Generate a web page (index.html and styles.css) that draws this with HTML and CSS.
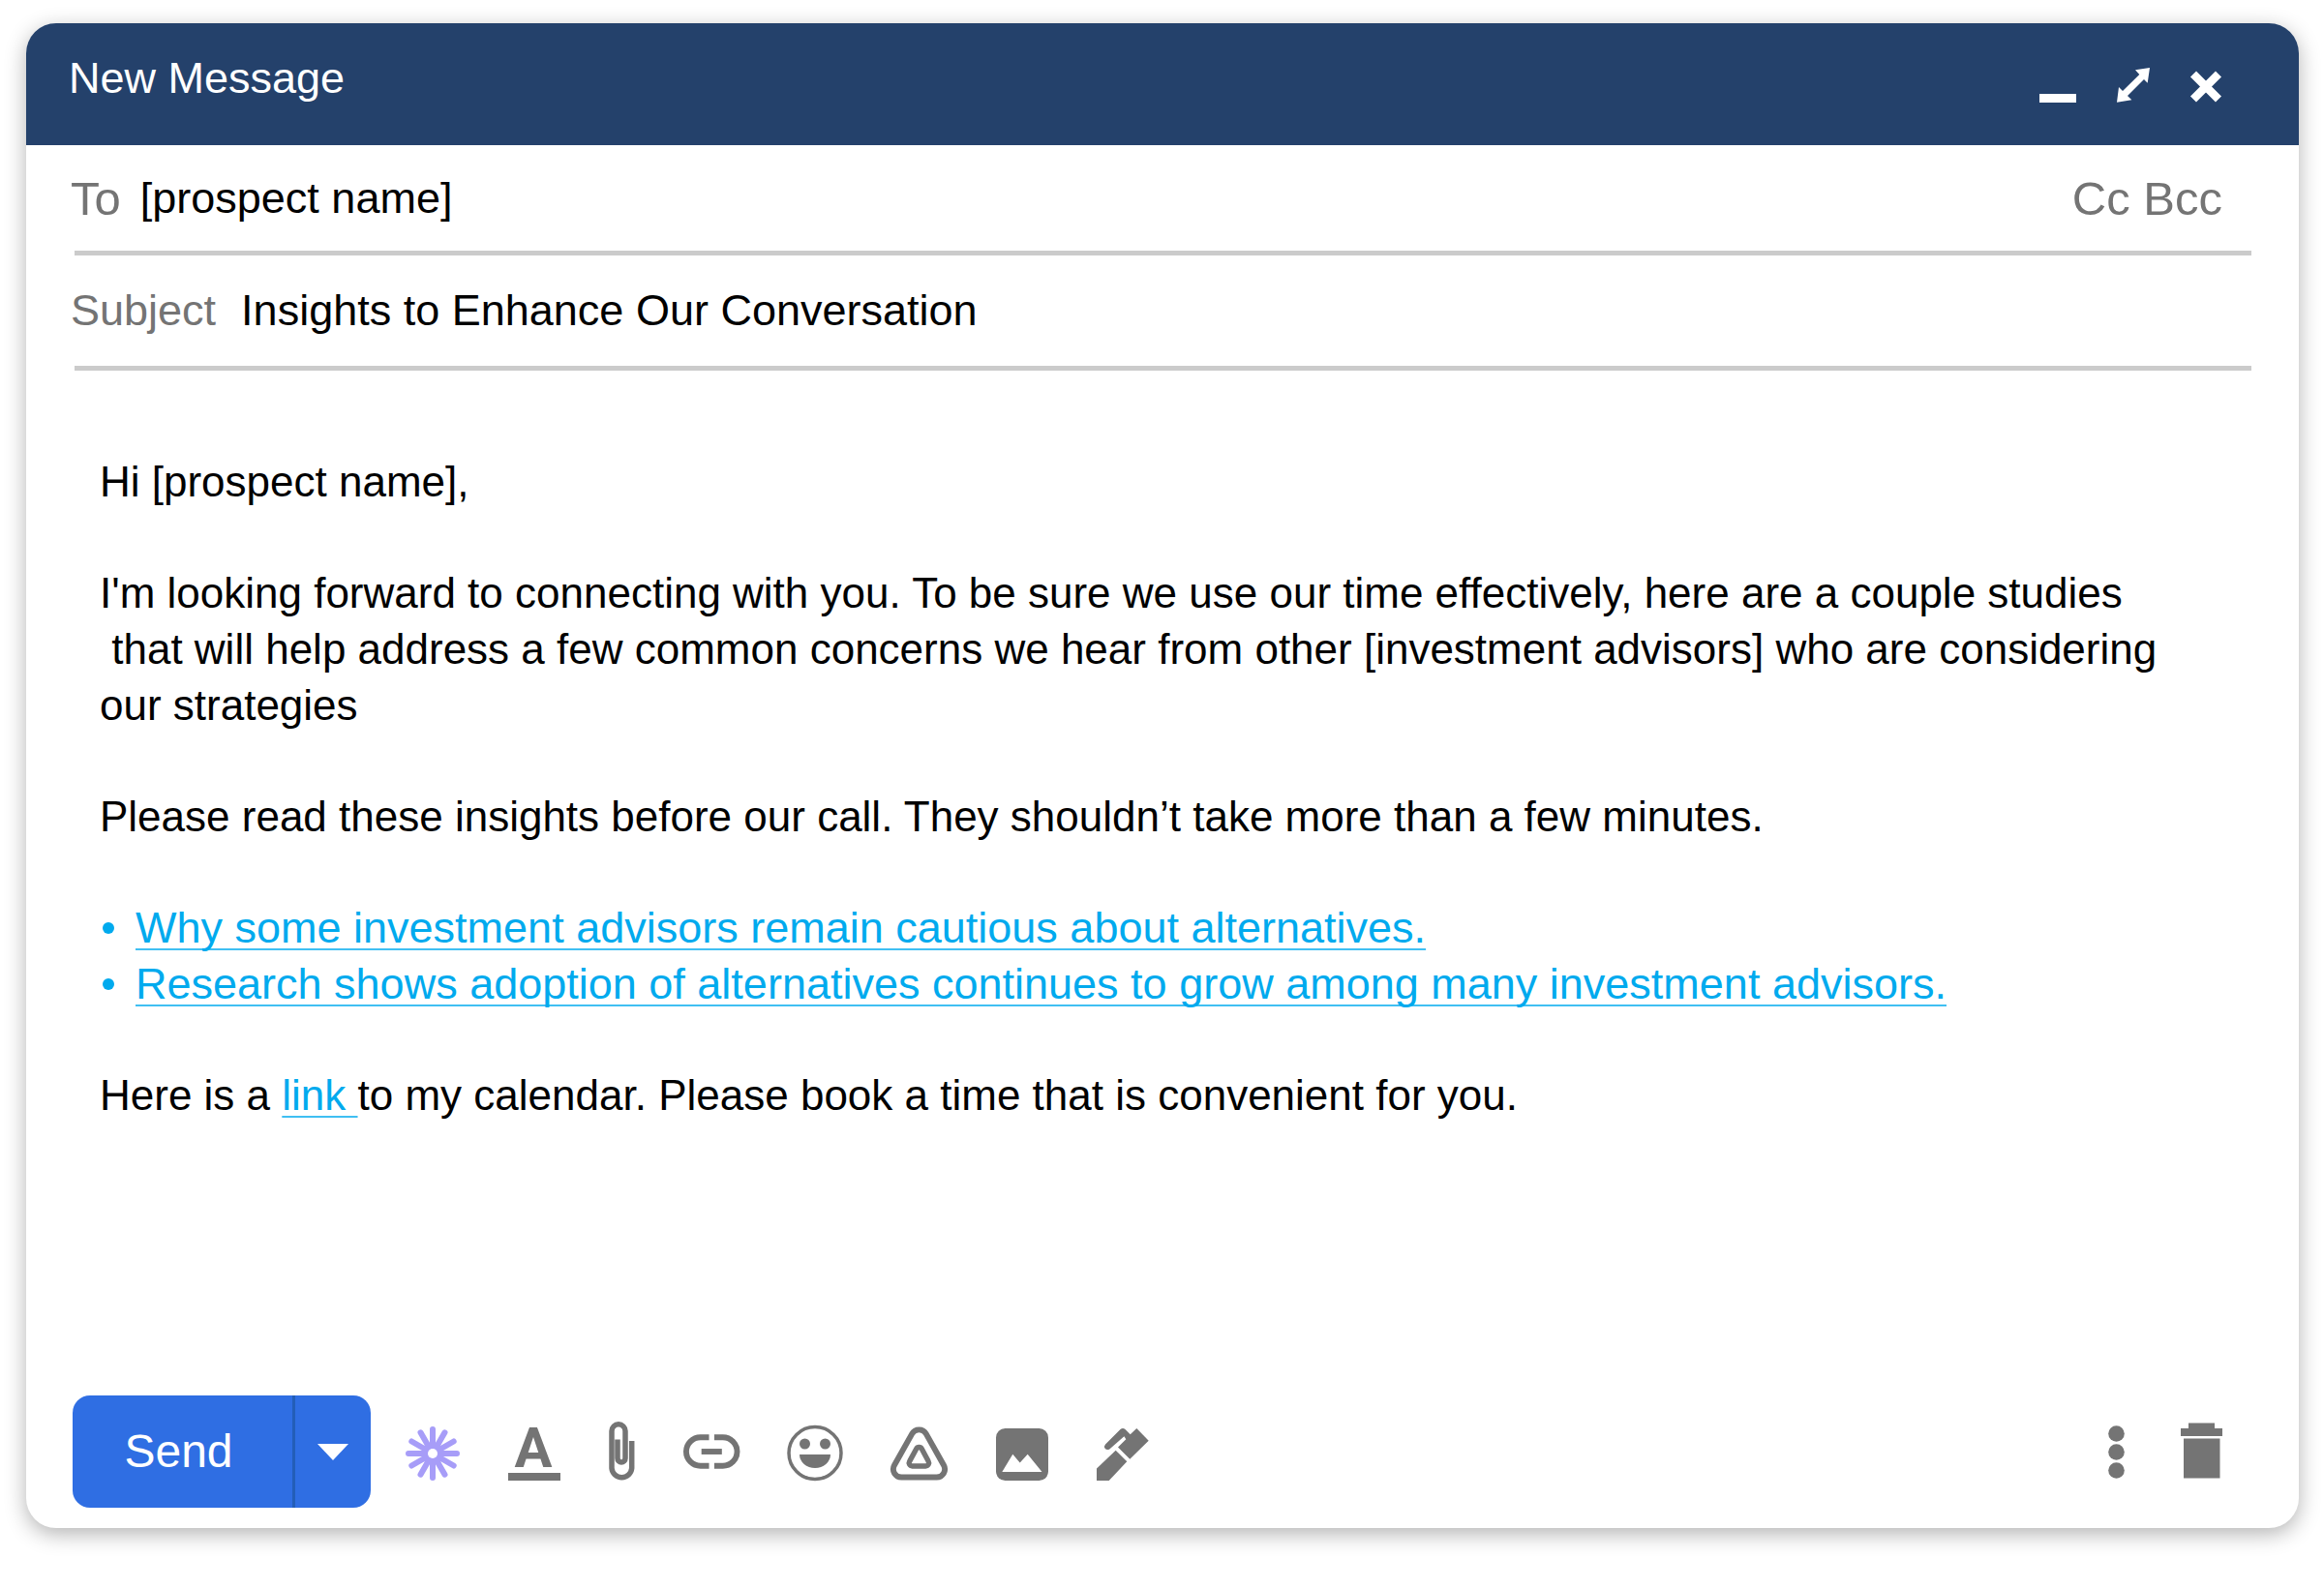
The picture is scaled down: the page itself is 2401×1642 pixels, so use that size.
FILE: index.html
```html
<!DOCTYPE html>
<html lang="en">
<head>
<meta charset="utf-8">
<title>New Message</title>
<link rel="stylesheet" href="styles.css">
</head>
<body>
<main class="compose">
  <header class="titlebar">
    <h1 class="title">New Message</h1>
    <div class="window-actions">
      <button type="button" class="icon-button" aria-label="Minimize">
        <svg width="38" height="36" viewBox="0 0 38 36"><rect y="27" width="38" height="9"/></svg>
      </button>
      <button type="button" class="icon-button" aria-label="Expand">
        <svg width="34" height="36" viewBox="0 0 34 36"><path d="M34 0 31.7 15.7 28 12 11 29 15.3 33.3 0 35.7 2 20 6 24 23.3 7 19 2.3Z"/></svg>
      </button>
      <button type="button" class="icon-button" aria-label="Close">
        <svg width="32" height="36" viewBox="0 0 32 36"><path d="M3 6.5 29 32.5M29 6.5 3 32.5" stroke="currentColor" stroke-width="8.5"/></svg>
      </button>
    </div>
  </header>

  <form class="form">
    <div class="field">
      <label class="label label-to" for="to">To</label>
      <input class="value" id="to" type="text" value="[prospect name]">
      <div class="copies"><button type="button" class="copy">Cc</button> <button type="button" class="copy">Bcc</button></div>
    </div>
    <hr class="rule">
    <div class="field field-subject">
      <label class="label" for="subject">Subject</label>
      <input class="value" id="subject" type="text" value="Insights to Enhance Our Conversation">
    </div>
    <hr class="rule">

    <div class="message">
      <p>Hi [prospect name],</p>
      <p>I'm looking forward to connecting with you. To be sure we use our time effectively, here are a couple studies<br>&nbsp;that will help address a few common concerns we hear from other [investment advisors] who are considering<br>our strategies</p>
      <p>Please read these insights before our call. They shouldn’t take more than a few minutes.</p>
      <ul class="links">
        <li><a href="#cautious">Why some investment advisors remain cautious about alternatives.</a></li>
        <li><a href="#adoption">Research shows adoption of alternatives continues to grow among many investment advisors.</a></li>
      </ul>
      <p>Here is a <a href="#calendar">link </a>to my calendar. Please book a time that is convenient for you.</p>
    </div>

    <footer class="toolbar">
      <div class="send-group">
        <button type="button" class="send">Send</button>
        <button type="button" class="send-more" aria-label="More send options">
          <svg width="32" height="17" viewBox="0 0 32 17"><path d="M0 0H32L16 17Z"/></svg>
        </button>
      </div>
      <div class="tools">
        <button type="button" class="icon-button assistant" aria-label="Assistant">
          <svg width="56" height="64" viewBox="0 0 56 64">
            <path d="M28 9V59M3 34H53M15.5 12.3 40.5 55.7M40.5 12.3 15.5 55.7M6.3 21.5 49.7 46.5M6.3 46.5 49.7 21.5" stroke="currentColor" stroke-width="6" stroke-linecap="round"/>
            <circle cx="28" cy="34" r="5" fill="#fff"/>
          </svg>
        </button>
        <button type="button" class="icon-button" aria-label="Text color">
          <svg width="54" height="64" viewBox="0 0 54 64"><text class="letter" x="26" y="48" text-anchor="middle">A</text><rect y="54" width="54" height="8"/></svg>
        </button>
        <button type="button" class="icon-button" aria-label="Attach file">
          <svg width="27" height="64" viewBox="0 0 27 64"><path transform="translate(0 1)" d="M23.7 20V48.3A10.4 10.4 0 0 1 3 48.3V9.8A7 7 0 0 1 17 9.8V38A4 4 0 0 1 9 38V18.5" fill="none" stroke="currentColor" stroke-width="5.5"/></svg>
        </button>
        <button type="button" class="icon-button" aria-label="Insert link">
          <svg width="58" height="64" viewBox="0 0 59 64"><path d="M27 17H18A15 15 0 0 0 18 47H27M32.5 17H41.5A15 15 0 0 1 41.5 47H32.5" fill="none" stroke="currentColor" stroke-width="6"/><rect x="19" y="29" width="21.5" height="6"/></svg>
        </button>
        <button type="button" class="icon-button" aria-label="Insert emoji">
          <svg width="56" height="64" viewBox="0 0 56 64"><circle cx="28" cy="33.5" r="27" fill="none" stroke="currentColor" stroke-width="3.5"/><circle cx="17.5" cy="24" r="5.5"/><circle cx="38.5" cy="24" r="5.5"/><path d="M12 35H44A16 14 0 0 1 12 35Z"/></svg>
        </button>
        <button type="button" class="icon-button" aria-label="Insert from drive">
          <svg width="59" height="64" viewBox="0 0 60 64"><g transform="translate(0 6)" fill="none" stroke="currentColor"><path stroke-width="6" d="M22.6 7.3A8.5 8.5 0 0 1 37.4 7.3L55.9 40.3A8.5 8.5 0 0 1 48.5 53H11.5A8.5 8.5 0 0 1 4.1 40.3Z"/><path stroke-width="5.5" d="M27.1 23.2A3.3 3.3 0 0 1 32.9 23.2L39.8 36.2A3.3 3.3 0 0 1 37 41.2H22.8A3.3 3.3 0 0 1 20 36.2Z"/></g></svg>
        </button>
        <button type="button" class="icon-button" aria-label="Insert photo">
          <svg width="54" height="64" viewBox="0 0 54 64"><rect y="8" width="54" height="54" rx="9.5"/><path d="M6.3 53 17.3 34.7 24.7 43.5 32.7 34.7 47.5 53Z" fill="#fff"/></svg>
        </button>
        <button type="button" class="icon-button" aria-label="Insert signature">
          <svg width="54" height="64" viewBox="0 0 54 64"><g transform="translate(0 8)"><path d="M0 41.5 19.7 22.7 31.3 34.3 12.7 54H0Z"/><path d="M22 19.5 30.3 11.2 28.4 8.3 13.3 21.5Q10.5 23 8.6 20.8 7.2 18.5 9 16.5L24.5 1Q27-1 29.5 1L34.7 6.3 41.3 0 53.7 12.7 34.3 31.7Z"/></g></svg>
        </button>
      </div>
      <div class="tools tools-end">
        <button type="button" class="icon-button" aria-label="More options">
          <svg width="17" height="64" viewBox="0 0 17 64"><circle cx="8.5" cy="13.5" r="8.3"/><circle cx="8.5" cy="32.5" r="8.3"/><circle cx="8.5" cy="51.5" r="8.3"/></svg>
        </button>
        <button type="button" class="icon-button" aria-label="Discard draft">
          <svg width="43" height="64" viewBox="0 0 43 64"><path d="M8 2.5H35V8H43V16H0V8H8ZM3 18.5H40.5V59.5H3Z"/></svg>
        </button>
      </div>
    </footer>
  </form>
</main>
</body>
</html>
```
FILE: styles.css
```css
* {
  box-sizing: border-box;
}

body {
  margin: 0;
  min-height: 100vh;
  padding: 24px 26px 63px 27px;
  display: flex;
  background: #fff;
  color: #000;
  font-family: "Liberation Sans", Arial, sans-serif;
  font-size: 44px;
  line-height: 58px;
}

button,
input {
  font: inherit;
  color: inherit;
  background: none;
  border: 0;
  padding: 0;
  margin: 0;
}

svg {
  display: block;
  fill: currentColor;
  overflow: visible;
}

.compose {
  flex: 1;
  display: flex;
  flex-direction: column;
  border-radius: 31px;
  background: #fff;
  box-shadow: 0 6px 22px rgba(0, 0, 0, 0.3);
}

.titlebar {
  display: flex;
  justify-content: space-between;
  align-items: flex-end;
  padding: 32px 80px 44px 44px;
  border-radius: 31px 31px 0 0;
  background: #24416b;
  color: #fff;
}

.title {
  margin: 0;
  font-size: 45px;
  font-weight: 400;
  line-height: 50px;
}

.window-actions {
  display: flex;
  gap: 42px;
}

.form {
  flex: 1;
  display: flex;
  flex-direction: column;
}

.field {
  display: flex;
  align-items: center;
  gap: 20px;
  height: 109px;
  padding: 0 79px 0 46px;
}

.field-subject {
  gap: 26px;
  height: 114px;
}

.label,
.copies {
  color: #747474;
}

.label,
.value,
.links {
  font-size: 45px;
}

.label-to,
.copies {
  font-size: 49px;
}

.value {
  flex: 1;
  min-width: 0;
}

.rule {
  width: auto;
  height: 5px;
  margin: 0 49px 0 50px;
  border: 0;
  background: #cbcbcb;
}

.message {
  flex: 1;
  display: flex;
  flex-direction: column;
  gap: 57px;
  padding: 86px 73px 57px 76px;
}

.message p,
.links {
  margin: 0;
}

.message a {
  color: #00aaee;
  text-decoration-color: #40bff2;
  text-decoration-thickness: 2px;
  text-underline-offset: 6px;
  text-decoration-skip-ink: none;
}

.links {
  padding: 0;
  list-style: none;
  color: #00aaee;
}

.links li {
  display: flex;
  align-items: center;
  gap: 22px;
  padding-left: 3px;
}

.links li::before {
  content: "";
  width: 12px;
  height: 12px;
  border-radius: 50%;
  background: currentColor;
}

.toolbar {
  display: flex;
  align-items: center;
  padding: 0 79px 21px 48px;
}

.send-group {
  display: flex;
  height: 116px;
  border-radius: 18px;
  overflow: hidden;
  background: #2f6ee3;
  color: #fff;
}

.send {
  width: 227px;
  padding-right: 8px;
  font-size: 48px;
}

.send-more {
  display: flex;
  align-items: center;
  justify-content: center;
  width: 81px;
  border-left: 3px solid #235eb8;
}

.tools {
  display: flex;
  gap: 50px;
  margin-left: 36px;
  color: #747474;
}

.tools-end {
  gap: 58px;
  margin-left: auto;
}

.assistant {
  color: #a79df8;
}

.letter {
  font-family: Roboto, sans-serif;
  font-size: 58px;
  font-weight: 700;
}
```
